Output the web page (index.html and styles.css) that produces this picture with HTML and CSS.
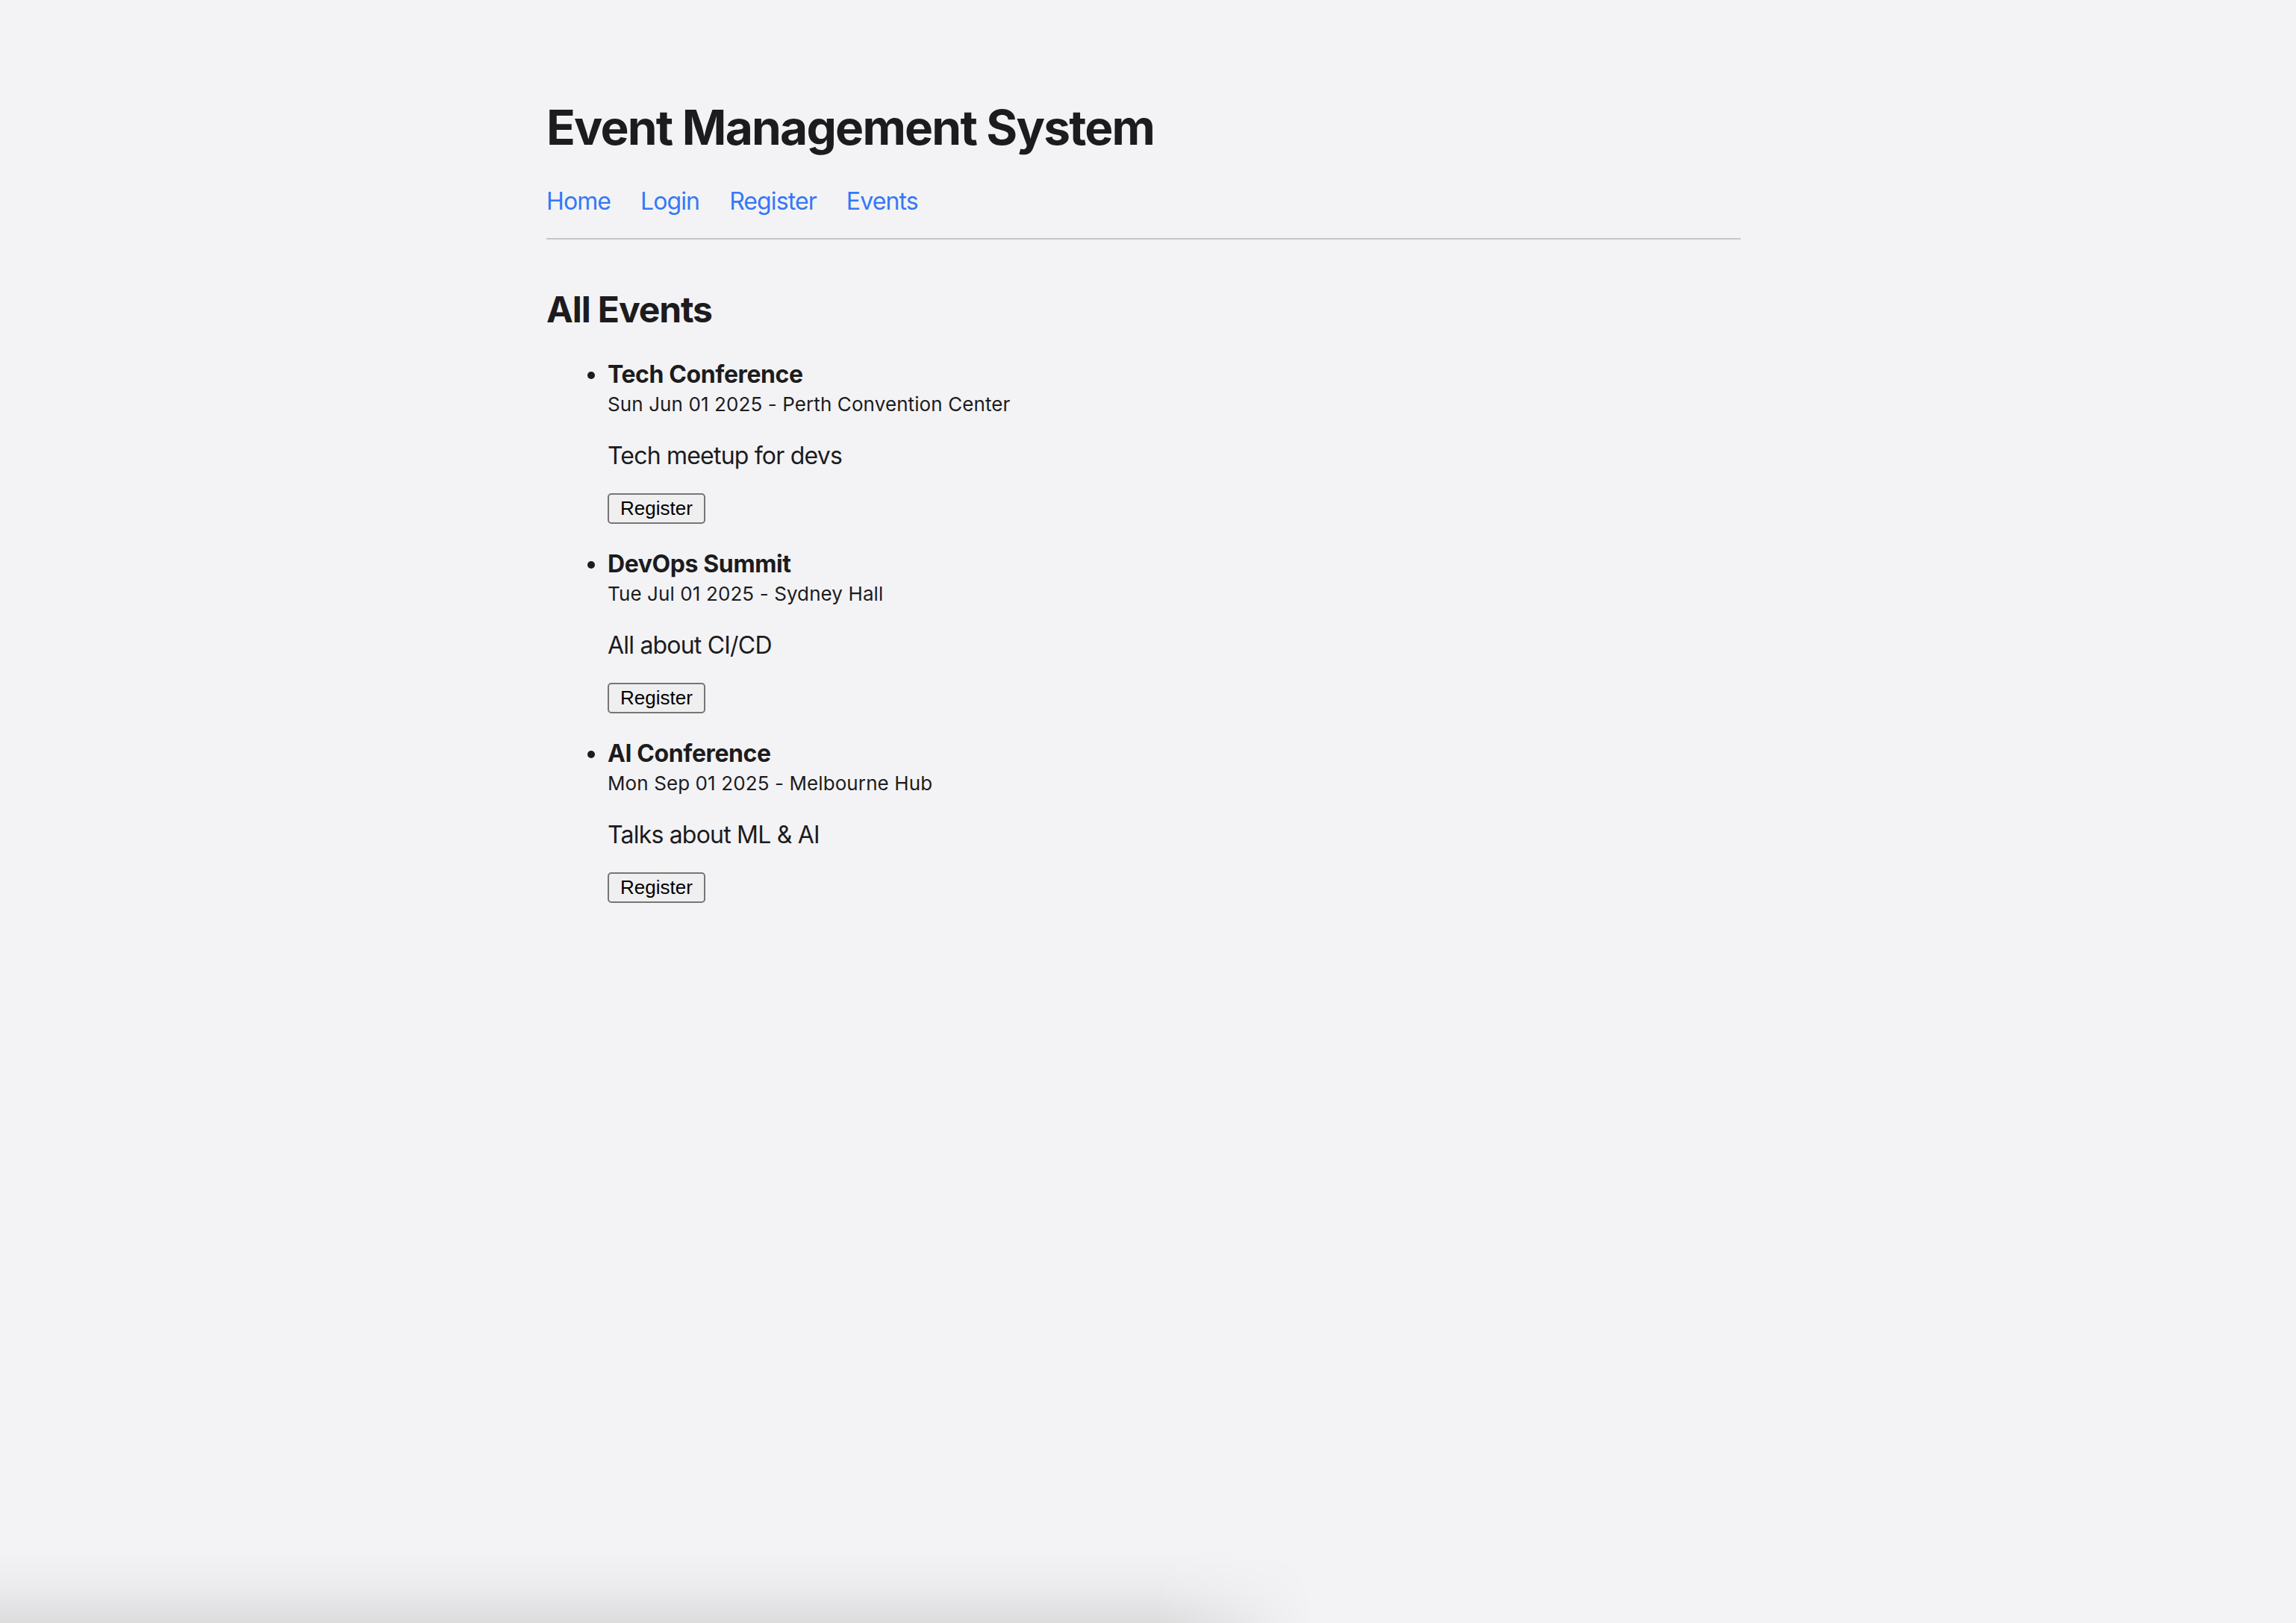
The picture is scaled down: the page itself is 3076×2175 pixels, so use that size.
FILE: index.html
```html
<!DOCTYPE html>
<html lang="en">
<head>
<meta charset="utf-8">
<title>Event Management System</title>
<link rel="stylesheet" href="styles.css">
</head>
<body>
<div class="page">
  <header class="site-header">
    <h1 class="site-title">Event Management System</h1>
    <nav class="nav">
      <a href="#" class="nav-link">Home</a>
      <a href="#" class="nav-link">Login</a>
      <a href="#" class="nav-link">Register</a>
      <a href="#" class="nav-link">Events</a>
    </nav>
    <hr class="divider">
  </header>
  <main>
    <h2 class="section-title">All Events</h2>
    <ul class="event-list">
      <li class="event">
        <div class="event-name">Tech Conference</div>
        <div class="event-meta">Sun Jun 01 2025 - Perth Convention Center</div>
        <p class="event-desc">Tech meetup for devs</p>
        <button class="btn">Register</button>
      </li>
      <li class="event">
        <div class="event-name">DevOps Summit</div>
        <div class="event-meta">Tue Jul 01 2025 - Sydney Hall</div>
        <p class="event-desc">All about CI/CD</p>
        <button class="btn">Register</button>
      </li>
      <li class="event">
        <div class="event-name">AI Conference</div>
        <div class="event-meta">Mon Sep 01 2025 - Melbourne Hub</div>
        <p class="event-desc">Talks about ML &amp; AI</p>
        <button class="btn">Register</button>
      </li>
    </ul>
  </main>
</div>
<div class="bottom-shadow"></div>
</body>
</html>
```
FILE: styles.css
```css
html, body {
  margin: 0;
  background: #f3f3f5;
}
body {
  padding-right: 12px;
  font-family: Inter, "Noto Sans", sans-serif;
  color: #1c1c1e;
}
.page {
  width: 1600px;
  margin: 0 auto;
  padding-top: 132px;
}
.site-title {
  margin: 0;
  font-size: 64px;
  line-height: 78px;
  font-weight: 700;
  letter-spacing: -1.8px;
}
.nav {
  display: flex;
  gap: 40px;
  margin-top: 40px;
  font-size: 32px;
  line-height: 40px;
  letter-spacing: -0.9px;
}
.nav-link {
  color: #3578f6;
  text-decoration: none;
}
.divider {
  margin: 29px 0 0;
  border: 0;
  border-top: 2px solid #c6c6c8;
  height: 0;
}
.section-title {
  margin: 65px 0 0;
  font-size: 48px;
  line-height: 58px;
  font-weight: 700;
  letter-spacing: -1.1px;
}
.event-list {
  margin: 38px 0 0;
  padding-left: 82px;
  list-style: disc;
}
.event {
  font-size: 32px;
  line-height: 40px;
  padding-bottom: 34px;
}
.event-name {
  font-weight: 700;
  letter-spacing: -0.4px;
}
.event-meta {
  margin-top: 2px;
  font-size: 26px;
  line-height: 36px;
  letter-spacing: 0.1px;
}
.event-desc {
  margin: 31px 0 0;
  font-size: 32px;
  line-height: 40px;
  letter-spacing: -0.8px;
}
.btn {
  display: block;
  margin-top: 30px;
  box-sizing: border-box;
  height: 41px;
  padding: 0 15px;
  font-family: "Liberation Sans", Arial, sans-serif;
  font-size: 26px;
  color: #000;
  background: #efefef;
  border: 2px solid #767676;
  border-radius: 5px;
}
.bottom-shadow {
  position: fixed;
  left: 0;
  bottom: 0;
  width: 1760px;
  height: 95px;
  background: linear-gradient(to bottom, rgba(0,0,0,0), rgba(0,0,0,0.035) 55%, rgba(0,0,0,0.09));
  -webkit-mask-image: linear-gradient(to right, #000 88%, transparent);
  mask-image: linear-gradient(to right, #000 88%, transparent);
  pointer-events: none;
}
```
